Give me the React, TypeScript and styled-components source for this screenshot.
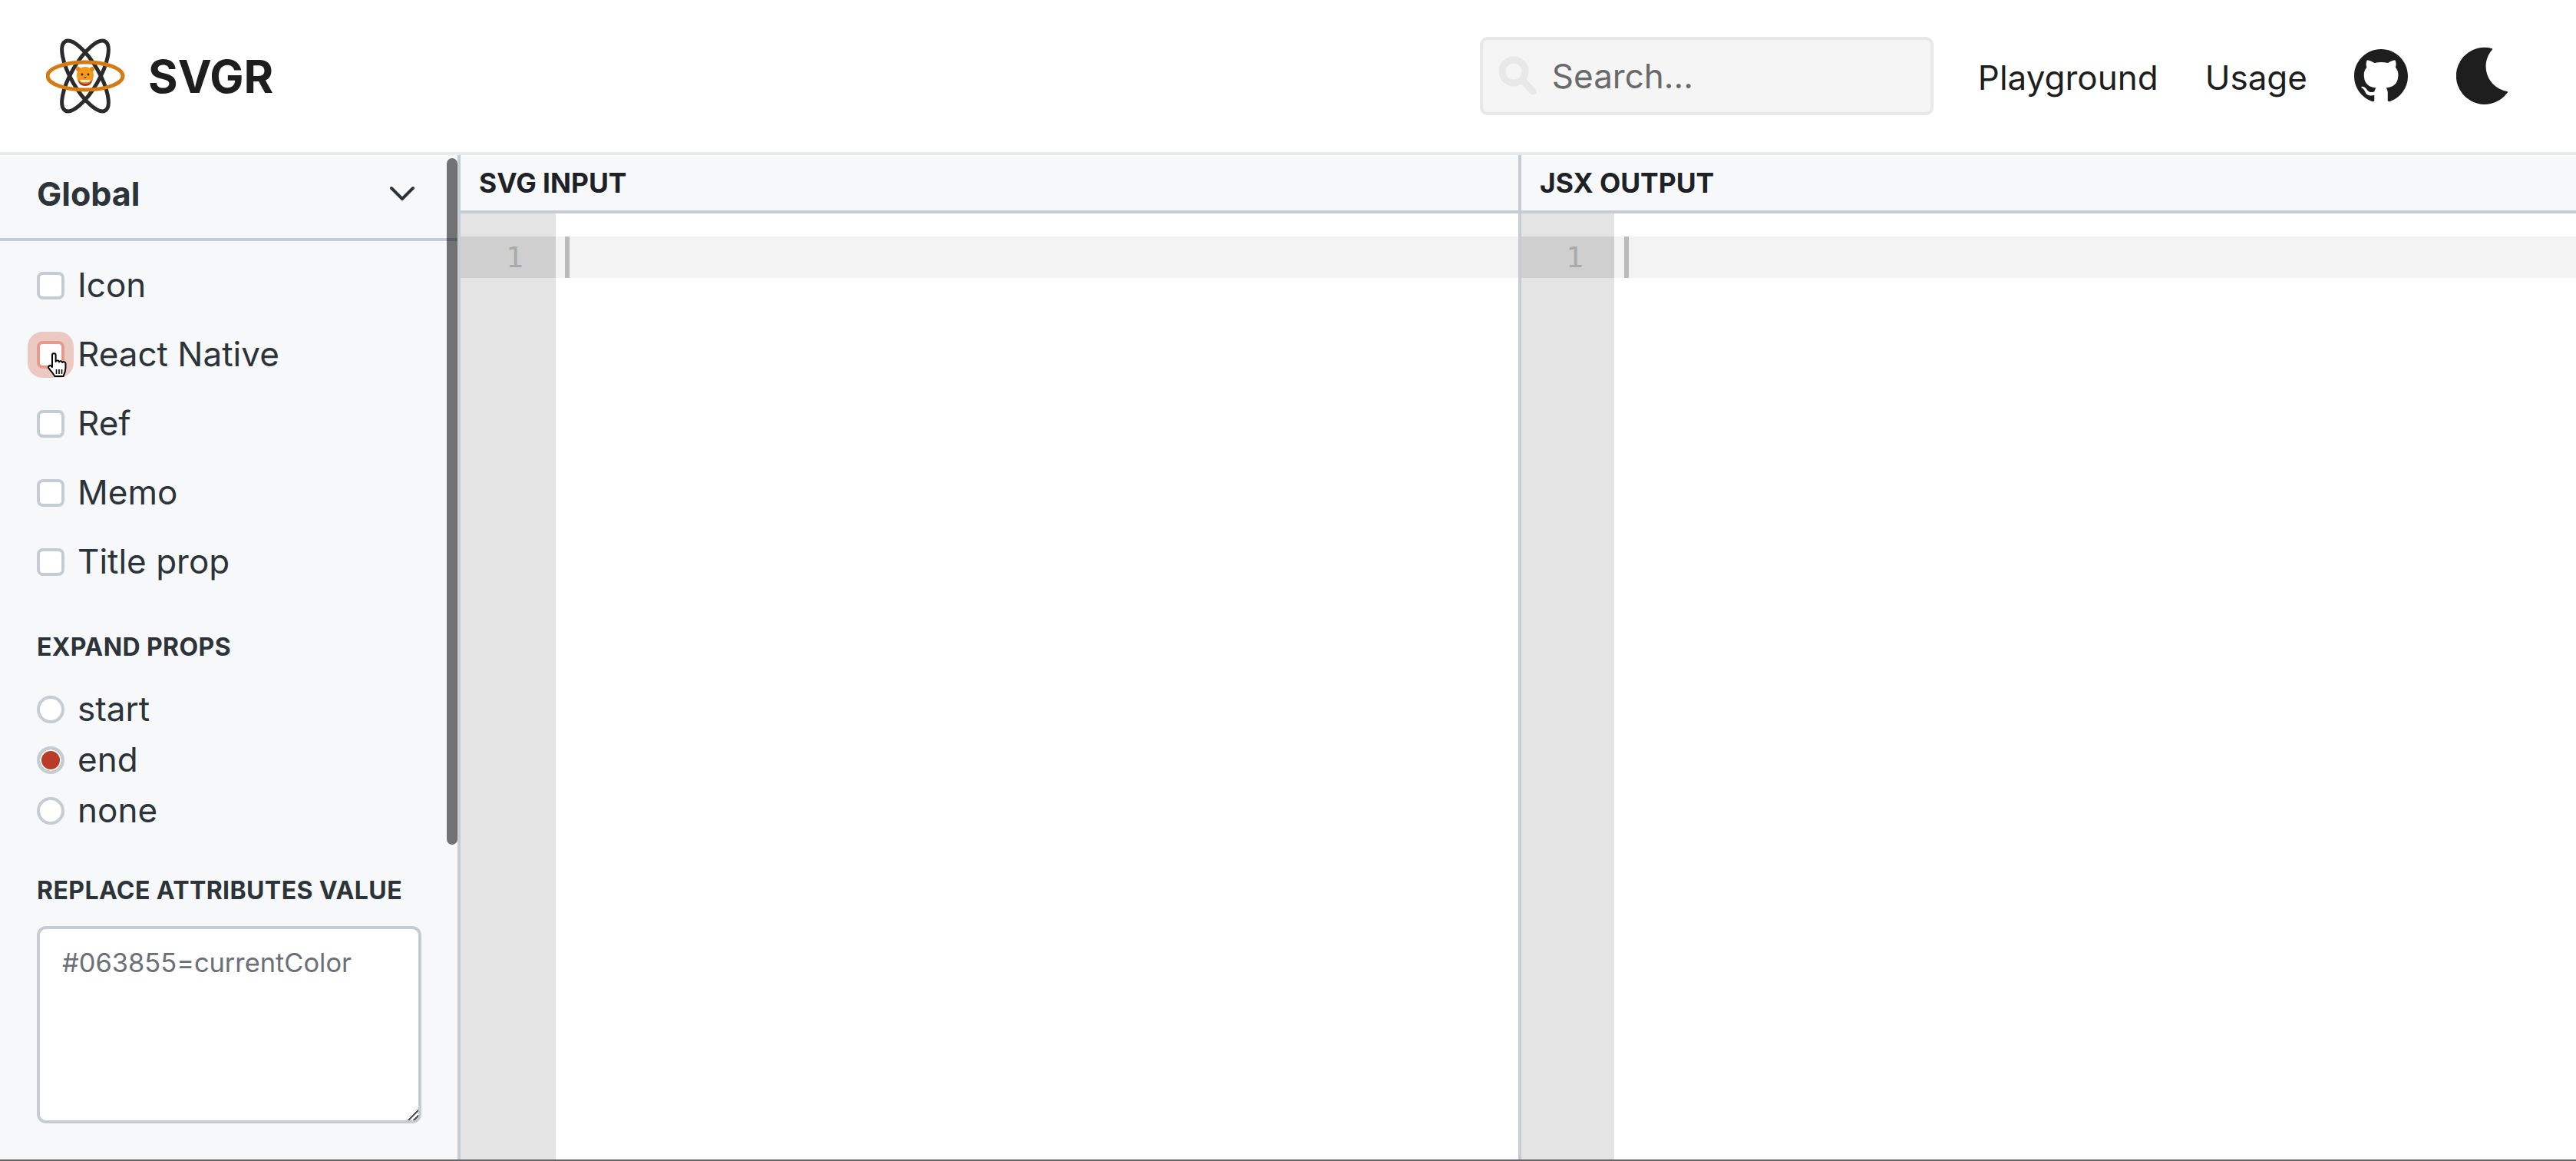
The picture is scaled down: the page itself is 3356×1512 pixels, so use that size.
import React from 'react';
import styled, { createGlobalStyle } from 'styled-components';

const Global = createGlobalStyle`
  html, body { margin: 0; padding: 0; background: #fff; overflow: hidden; }
  * { box-sizing: border-box; }
  body { font-family: Inter, "Liberation Sans", sans-serif; }
`;

const Page = styled.div`
  width: 3356px;
  height: 1512px;
  display: flex;
  flex-direction: column;
`;

const Header = styled.header`
  flex: 0 0 202px;
  display: flex;
  align-items: center;
  padding: 0 86px 0 60px;
  border-bottom: 4px solid #e8e9ea;
  background: #fff;
`;

const Brand = styled.a`
  display: flex;
  align-items: center;
  gap: 29px;
  color: #1e1e1e;
  font-size: 59px;
  font-weight: 700;
  line-height: 1;
`;

const SearchBox = styled.div`
  margin-left: auto;
  width: 591px;
  height: 102px;
  display: flex;
  align-items: center;
  gap: 20px;
  padding: 0 20px;
  background: #f5f5f5;
  border: 4px solid #e8e8e8;
  border-radius: 10px;
  color: #6a6a6a;
  font-size: 44px;
`;

const Nav = styled.nav`
  display: flex;
  align-items: center;
  margin-left: 58px;
`;

const NavLink = styled.a`
  color: #1e1e1e;
  font-size: 44px;
  padding-top: 3px;
  margin-right: 61px;
`;

const GithubIcon = styled.svg`
  display: block;
  width: 70px;
  height: 70px;
  fill: #1e1e1e;
  margin-right: 63px;
`;

const MoonIcon = styled.svg`
  display: block;
  width: 70px;
  height: 80px;
  fill: #1e1e1e;
`;

const Main = styled.main`
  flex: 1;
  min-height: 0;
  display: flex;
  border-bottom: 2px solid #666;
`;

const Sidebar = styled.aside`
  position: relative;
  flex: 0 0 600px;
  background: #f6f8fa;
  border-right: 4px solid #c6ccd4;
  color: #2d3439;
`;

const Scrollbar = styled.div`
  position: absolute;
  top: 4px;
  right: 0;
  width: 14px;
  height: 894px;
  background: rgba(0, 0, 0, 0.54);
  border-radius: 7px;
`;

const SectionHeader = styled.div`
  height: 112px;
  display: flex;
  align-items: center;
  justify-content: space-between;
  padding: 0 56px 8px 48px;
  border-bottom: 4px solid #c6ccd4;
  font-size: 43px;
  font-weight: 700;
`;

const Chevron = styled.svg`
  display: block;
  width: 32px;
  height: 20px;
  fill: none;
  stroke: #2d3439;
  stroke-width: 4;
  stroke-linecap: round;
  stroke-linejoin: round;
`;

const Fields = styled.div`
  display: flex;
  flex-direction: column;
  padding: 13px 47px 0 48px;
`;

const CheckRow = styled.label`
  position: relative;
  height: 90px;
  display: flex;
  align-items: center;
  gap: 17px;
  font-size: 44px;
`;

const OptionText = styled.span`
  margin-bottom: 3px;
`;

const CheckBox = styled.span<{ $focus?: boolean }>`
  flex: 0 0 36px;
  height: 36px;
  background: #fff;
  border: 4px solid ${(p) => (p.$focus ? '#e59a8c' : '#c6ccd4')};
  border-radius: 8px;
  ${(p) => (p.$focus ? 'box-shadow: 0 0 0 12px #ebc8c2;' : '')}
`;

const Cursor = styled.svg`
  position: absolute;
  left: 12px;
  top: 42px;
  width: 32px;
  height: 36px;
`;

const GroupLabel = styled.div<{ $top: number }>`
  margin-top: ${(p) => p.$top}px;
  height: 48px;
  line-height: 48px;
  font-size: 32px;
  font-weight: 700;
  letter-spacing: 0.4px;
  white-space: nowrap;
`;

const RadioList = styled.div`
  margin-top: 24px;
  display: flex;
  flex-direction: column;
`;

const RadioRow = styled.label`
  height: 66px;
  display: flex;
  align-items: center;
  gap: 17px;
  font-size: 44px;
`;

const RadioDot = styled.span<{ $on?: boolean }>`
  flex: 0 0 36px;
  height: 36px;
  border-radius: 50%;
  border: 4px solid #c6ccd4;
  background: ${(p) => (p.$on ? '#b83c28' : '#fff')};
  box-shadow: inset 0 0 0 ${(p) => (p.$on ? '2px' : '0')} #fff;
`;

const AttrInput = styled.textarea`
  display: block;
  margin-top: 22px;
  width: 501px;
  height: 257px;
  padding: 22px 29px;
  background: #fff;
  border: 4px solid #c6ccd4;
  border-radius: 12px;
  outline: none;
  resize: vertical;
  font-family: Inter, sans-serif;
  font-size: 34.4px;
  line-height: 1.25;
  &::placeholder { color: #6a7077; opacity: 1; }
  &::-webkit-resizer {
    background: linear-gradient(
      135deg,
      transparent 50%,
      #555 50%,
      #555 60%,
      transparent 60%,
      transparent 74%,
      #555 74%,
      #555 84%,
      transparent 84%
    );
  }
`;

const Panel = styled.section<{ $divider?: boolean }>`
  ${(p) => (p.$divider ? 'flex: 0 0 1382px; border-right: 4px solid #c6ccd4;' : 'flex: 1;')}
  min-width: 0;
  display: flex;
  flex-direction: column;
`;

const PanelTitle = styled.div<{ $pad: number }>`
  flex: 0 0 76px;
  display: flex;
  align-items: center;
  padding: 0 0 0 ${(p) => p.$pad}px;
  background: #f6f8fa;
  border-bottom: 4px solid #c6ccd4;
  color: #1e2227;
  font-size: 35.4px;
  font-weight: 700;
`;

const CodeArea = styled.div`
  flex: 1;
  min-height: 0;
  display: flex;
  background: #fff;
`;

const Gutter = styled.div<{ $w: number }>`
  flex: 0 0 ${(p) => p.$w}px;
  padding-top: 30px;
  background: #e4e4e4;
`;

const LineNumber = styled.div<{ $right: number }>`
  height: 54px;
  padding-right: ${(p) => p.$right}px;
  background: #cfcfcf;
  color: #aaa;
  font-family: "DejaVu Sans Mono", monospace;
  font-size: 38px;
  line-height: 54px;
  text-align: right;
`;

const CodeColumn = styled.div`
  flex: 1;
  padding-top: 30px;
`;

const ActiveLine = styled.div<{ $pad: number }>`
  height: 54px;
  padding-left: ${(p) => p.$pad}px;
  background: #f3f3f3;
`;

const Caret = styled.div`
  width: 6px;
  height: 54px;
  background: #bbb;
`;

const Logo = () => (
  <svg width="104" height="98" viewBox="0 0 104 98" style={{ display: 'block' }}>
    <g fill="none" strokeWidth="5">
      <ellipse cx="51" cy="49" rx="52" ry="18" stroke="#2b2b2b" transform="rotate(60 51 49)" />
      <ellipse cx="51" cy="49" rx="52" ry="18" stroke="#2b2b2b" transform="rotate(-60 51 49)" />
      <ellipse cx="51" cy="49" rx="49" ry="18" stroke="#d67a12" />
    </g>
    <path d="M41 50c0 8 4 12 10 12s10-4 10-12z" fill="#a8381c" />
    <circle cx="51" cy="48" r="11" fill="#f39a1c" />
    <circle cx="42" cy="40" r="3" fill="#e8860f" />
    <circle cx="60" cy="40" r="3" fill="#e8860f" />
    <circle cx="47" cy="47" r="1.4" fill="#3a2010" />
    <circle cx="55" cy="47" r="1.4" fill="#3a2010" />
    <path d="M44 54h14l-2 3H46z" fill="#f5e3c8" />
    <path d="M49 50h4l-2 2z" fill="#7a2a10" />
  </svg>
);

const SearchGlyph = () => (
  <svg width="50" height="52" viewBox="0 0 50 52" fill="none" stroke="#e8e8e8" strokeWidth="9" strokeLinecap="round" style={{ flex: '0 0 50px' }}>
    <circle cx="20" cy="20" r="15" />
    <path d="M32 32l13 14" />
  </svg>
);

const Hand = () => (
  <Cursor viewBox="0 0 32 36">
    <path
      d="M8 3.5c0-3 4.6-3 4.6 0V12c.5-2.2 4.2-2 4.4.4.6-1.9 4-1.6 4.2.7.8-1.6 4-1.1 4.2 1.1.3 3.6.3 7-.6 10.4-.7 2.6-1.6 4.4-2.2 6.4H11.4C9.6 27.6 6.6 24.4 3.6 20.6c-1.8-2.4 1.2-4.6 3.2-2.8L8 19z"
      fill="#fff"
      stroke="#000"
      strokeWidth="2"
      strokeLinejoin="round"
    />
    <path d="M13.5 22v6M17 22v6M20.5 22v6" stroke="#000" strokeWidth="1.6" />
  </Cursor>
);

export default function App() {
  return (
    <Page>
      <Global />
      <Header>
        <Brand>
          <Logo />
          SVGR
        </Brand>
        <SearchBox>
          <SearchGlyph />
          Search...
        </SearchBox>
        <Nav>
          <NavLink>Playground</NavLink>
          <NavLink>Usage</NavLink>
          <GithubIcon viewBox="0 0 16 16">
            <path d="M8 0C3.58 0 0 3.58 0 8c0 3.54 2.29 6.53 5.47 7.59.4.07.55-.17.55-.38 0-.19-.01-.82-.01-1.49-2.01.37-2.53-.49-2.69-.94-.09-.23-.48-.94-.82-1.13-.28-.15-.68-.52-.01-.53.63-.01 1.08.58 1.23.82.72 1.21 1.87.87 2.33.66.07-.52.28-.87.51-1.07-1.78-.2-3.64-.89-3.64-3.95 0-.87.31-1.59.82-2.15-.08-.2-.36-1.02.08-2.12 0 0 .67-.21 2.2.82.64-.18 1.32-.27 2-.27.68 0 1.36.09 2 .27 1.53-1.04 2.2-.82 2.2-.82.44 1.1.16 1.92.08 2.12.51.56.82 1.27.82 2.15 0 3.07-1.87 3.75-3.65 3.95.29.25.54.73.54 1.48 0 1.07-.01 1.93-.01 2.2 0 .21.15.46.55.38A8.013 8.013 0 0016 8c0-4.42-3.58-8-8-8z" />
          </GithubIcon>
          <MoonIcon viewBox="0 0 70 80">
            <path d="M46 5A36 36 0 1 0 66 61A34 34 0 0 1 46 5Z" stroke="#1e1e1e" strokeWidth="2" strokeLinejoin="round" />
          </MoonIcon>
        </Nav>
      </Header>
      <Main>
        <Sidebar>
          <Scrollbar />
          <SectionHeader>
            Global
            <Chevron viewBox="0 0 32 20">
              <path d="M2 3l14 14L30 3" />
            </Chevron>
          </SectionHeader>
          <Fields>
            <CheckRow><CheckBox /><OptionText>Icon</OptionText></CheckRow>
            <CheckRow><CheckBox $focus /><OptionText>React Native</OptionText><Hand /></CheckRow>
            <CheckRow><CheckBox /><OptionText>Ref</OptionText></CheckRow>
            <CheckRow><CheckBox /><OptionText>Memo</OptionText></CheckRow>
            <CheckRow><CheckBox /><OptionText>Title prop</OptionText></CheckRow>
            <GroupLabel $top={42}>EXPAND PROPS</GroupLabel>
            <RadioList>
              <RadioRow><RadioDot /><OptionText>start</OptionText></RadioRow>
              <RadioRow><RadioDot $on /><OptionText>end</OptionText></RadioRow>
              <RadioRow><RadioDot /><OptionText>none</OptionText></RadioRow>
            </RadioList>
            <GroupLabel $top={47}>REPLACE ATTRIBUTES VALUE</GroupLabel>
            <AttrInput placeholder="#063855=currentColor" />
          </Fields>
        </Sidebar>
        <Panel $divider>
          <PanelTitle $pad={24}>SVG INPUT</PanelTitle>
          <CodeArea>
            <Gutter $w={124}><LineNumber $right={42}>1</LineNumber></Gutter>
            <CodeColumn><ActiveLine $pad={12}><Caret /></ActiveLine></CodeColumn>
          </CodeArea>
        </Panel>
        <Panel>
          <PanelTitle $pad={24}>JSX OUTPUT</PanelTitle>
          <CodeArea>
            <Gutter $w={121}><LineNumber $right={40}>1</LineNumber></Gutter>
            <CodeColumn><ActiveLine $pad={13}><Caret /></ActiveLine></CodeColumn>
          </CodeArea>
        </Panel>
      </Main>
    </Page>
  );
}
